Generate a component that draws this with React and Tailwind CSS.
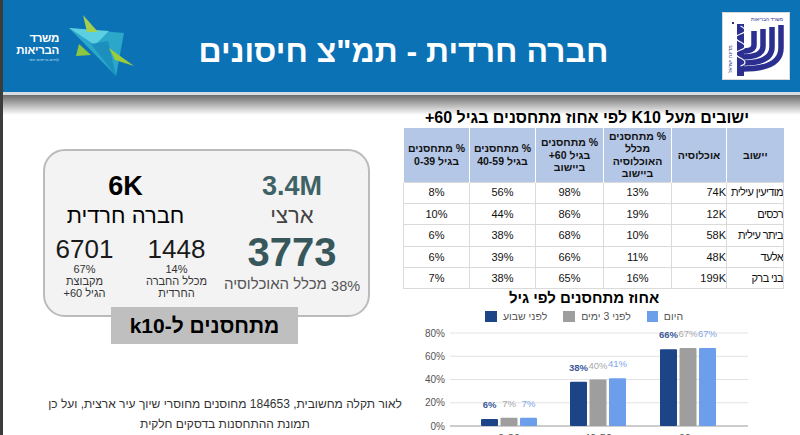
import React from 'react';

const rows = [
  { city: 'מודיעין עילית', pop: '74K', all: '13%', a60: '98%', a40: '56%', a0: '8%' },
  { city: 'רכסים', pop: '12K', all: '19%', a60: '86%', a40: '44%', a0: '10%' },
  { city: 'ביתר עילית', pop: '58K', all: '10%', a60: '68%', a40: '38%', a0: '6%' },
  { city: 'אלעד', pop: '48K', all: '11%', a60: '66%', a40: '39%', a0: '6%' },
  { city: 'בני ברק', pop: '199K', all: '16%', a60: '65%', a40: '38%', a0: '7%' },
];

const heads = [
  { w: 'w-[57px]', lines: ['יישוב'] },
  { w: 'w-[55px]', lines: ['אוכלוסיה'] },
  { w: 'w-[68px]', lines: ['% מתחסנים', 'מכלל', 'האוכלוסיה', 'ביישוב'] },
  { w: 'w-[68px]', lines: ['% מתחסנים', 'בגיל 60+', 'ביישוב'] },
  { w: 'w-[66px]', lines: ['% מתחסנים', 'בגיל 40-59'] },
  { w: 'w-[66px]', lines: ['% מתחסנים', 'בגיל 0-39'] },
];

const groups = [
  { label: '0-39', x: 78, vals: [6, 7, 7] },
  { label: '40-59', x: 167, vals: [38, 40, 41] },
  { label: '60+', x: 257, vals: [66, 67, 67] },
];
const barColors = ['#1c4587', '#9e9e9e', '#6d9eeb'];
const labelColors = ['#3c5a99', '#a9a9a9', '#7fa5e8'];
const yOf = (v) => 101 - v * 1.1625;

const HealthLogo = () => (
  <div className="flex items-center">
    <div dir="rtl" className="w-[42px] text-right text-white">
      <div className="text-[11.5px] font-bold leading-[12px] tracking-[-0.3px]">משרד</div>
      <div className="text-[11.5px] font-bold leading-[13px] tracking-[-0.3px]">הבריאות</div>
      <div className="text-[4px] leading-[6px] text-[#cfe6f5]">לחיים בריאים יותר</div>
    </div>
    <svg width="68" height="66" viewBox="0 0 68 66" className="ml-[8px]">
      <polygon points="2,14 57,19 49,62" fill="#2aa7c9" />
      <polygon points="2,14 42,17 28,31" fill="#5ccfe0" />
      <polygon points="24,30 49,62 41,27" fill="#1c8fbd" />
      <polygon points="16,1 31,18 20,18" fill="#a5cf4c" />
      <polygon points="42,34 67,52 48,46" fill="#9ccb3b" />
      <polygon points="12,30 24,41 9,42" fill="#8cc63f" />
    </svg>
  </div>
);

const MenorahLogo = () => (
  <div className="w-[68px] h-[68px] bg-white border border-[#d8d8d8]">
    <svg width="66" height="66" viewBox="0 0 66 66">
      <text x="60" y="8" fontSize="5" fill="#2b2f8f" textAnchor="end" fontFamily="Liberation Sans, sans-serif">משרד הבריאות</text>
      <text transform="translate(9 60) rotate(-90)" fontSize="5" fill="#2b2f8f" fontFamily="Liberation Sans, sans-serif">מדינת ישראל</text>
      <rect x="9" y="9" width="2" height="2" fill="#2b2f8f" />
      {[58, 49, 40, 31].map((x, i) => {
        const yb = 56 - i * 6;
        return (
          <path
            key={x}
            d={`M${x} ${12 + i * 2} V${yb - (x - 20) * 0.55} Q${x} ${yb} 20 ${yb}`}
            fill="none"
            stroke="#2b2f8f"
            strokeWidth="5.5"
          />
        );
      })}
      <rect x="14" y="11" width="7" height="52" fill="#2b2f8f" />
      <path d="M17.5 13 c6 3 6 6 0 8 c-6 2 -6 5 0 8 c6 3 6 6 0 8 c-6 2 -6 5 0 8 c6 3 6 6 0 8" fill="none" stroke="#ffffff" strokeWidth="1.2" />
    </svg>
  </div>
);

const Chart = () => (
  <svg width="380" height="110" viewBox="0 0 380 110" className="block">
    {[0, 20, 40, 60, 80].map((v) => (
      <g key={v}>
        <line x1="47" x2="345" y1={yOf(v)} y2={yOf(v)} stroke={v === 0 ? '#9a9a9a' : '#e3e3e3'} strokeWidth="1" />
        <text x="42" y={yOf(v) + 3.5} fontSize="10" fill="#555" textAnchor="end" fontFamily="Liberation Sans, sans-serif">{v}%</text>
      </g>
    ))}
    {groups.map((g) => (
      <g key={g.label}>
        {g.vals.map((v, i) => {
          const bx = g.x + i * 19.5;
          return (
            <g key={i}>
              <rect x={bx} y={yOf(v)} width="17" height={v * 1.1625} rx="1" fill={barColors[i]} />
              <text
                x={bx + 8.5}
                y={yOf(v) - 11}
                fontSize="9.5"
                fontWeight={i === 0 ? 700 : 400}
                fill={labelColors[i]}
                textAnchor="middle"
                fontFamily="Liberation Sans, sans-serif"
              >
                {v}%
              </text>
            </g>
          );
        })}
        <text x={g.x + 28} y="117" fontSize="11" fill="#555" textAnchor="middle" fontFamily="Liberation Sans, sans-serif">{g.label}</text>
      </g>
    ))}
  </svg>
);

const App = () => {
  return (
    <div className="w-[800px] h-[435px] overflow-hidden flex bg-white font-['Liberation_Sans','DejaVu_Sans',sans-serif]">
      {/* dark left edge */}
      <div className="w-[3px] bg-[#3c3c3c] shrink-0" />

      <div className="flex-1 flex flex-col">
        {/* header */}
        <header className="h-[92px] bg-[#0b72b6] grid grid-cols-[1fr_auto_1fr] items-center pl-[14px] pr-[10px] shrink-0">
          <div className="justify-self-start pt-[2px]">
            <HealthLogo />
          </div>
          <h1 dir="rtl" className="text-white text-[32px] font-bold leading-none pt-[10px]">
            {'חברה חרדית - תמ"צ חיסונים'}
          </h1>
          <div className="justify-self-end">
            <MenorahLogo />
          </div>
        </header>
        <div className="h-[3px] bg-[#d6dce4] shrink-0" />

        {/* body */}
        <div className="flex-1 flex bg-[linear-gradient(to_bottom,#6b6b6b_0px,#ffffff_20px)]">
          {/* left column */}
          <div className="w-[400px] flex flex-col">
            <div dir="rtl" className="ml-[40px] mt-[54px] w-[327px] h-[168px] rounded-[22px] border-2 border-[#bbbbbb] bg-[#f3f3f3] flex pt-[19px]">
              <div className="w-[152px] flex flex-col items-center">
                <div className="text-[27px] font-bold leading-[32px] text-[#3f6266]">3.4M</div>
                <div className="text-[22px] leading-[27px] text-[#444]">ארצי</div>
                <div className="text-[40px] font-bold leading-[46px] text-[#37575b]">3773</div>
                <div className="text-[15px] leading-[18px] text-[#555] whitespace-nowrap">
                  <span className="text-[14.5px] relative top-[2px]">38%</span> מכלל האוכלוסיה
                </div>
              </div>
              <div className="flex-1 flex flex-col items-center">
                <div className="pr-[10px] flex flex-col items-center">
                  <div className="text-[27px] font-bold leading-[32px] text-black">6K</div>
                  <div className="text-[22px] leading-[28px] text-black">חברה חרדית</div>
                </div>
                <div className="flex gap-[22px] mt-[6px]">
                  <div className="w-[70px] flex flex-col items-center">
                    <div className="text-[26px] leading-[27px] text-[#1a1a1a]">1448</div>
                    <div className="text-[11px] leading-[12px] text-[#333] text-center">
                      <div>14%</div>
                      <div>מכלל החברה</div>
                      <div>החרדית</div>
                    </div>
                  </div>
                  <div className="w-[70px] flex flex-col items-center">
                    <div className="text-[26px] leading-[27px] text-[#1a1a1a]">6701</div>
                    <div className="text-[11px] leading-[12px] text-[#333] text-center">
                      <div>67%</div>
                      <div>מקבוצת</div>
                      <div>הגיל 60+</div>
                    </div>
                  </div>
                </div>
              </div>
            </div>

            <div dir="rtl" className="ml-[108px] -mt-[10px] w-[187px] h-[37px] bg-[#bfbfbf] flex items-center justify-center text-[21px] font-bold text-black">
              מתחסנים ל-k10
            </div>

            <div dir="rtl" className="ml-[32px] mt-[50px] w-[380px] text-center text-[12px] leading-[20px] text-[#333]">
              <div className="whitespace-nowrap">לאור תקלה מחשובית, 184653 מחוסנים מחוסרי שיוך עיר ארצית, ועל כן</div>
              <div>תמונת ההתחסנות בדסקים חלקית</div>
            </div>
          </div>

          {/* right column */}
          <div className="flex-1 flex flex-col pt-[13px]">
            <div dir="rtl" className="w-[368px] text-center text-[16px] font-bold leading-[20px] text-black">
              ישובים מעל K10 לפי אחוז מתחסנים בגיל 60+
            </div>
            <table dir="rtl" className="w-[380px] border-collapse table-fixed">
              <thead>
                <tr className="h-[54px] bg-[#b4c7e7]">
                  {heads.map((h, i) => (
                    <th key={i} className={`${h.w} border-l border-white text-[10.5px] font-bold leading-[12.5px] text-center text-[#111] p-0`}>
                      {h.lines.map((l) => (
                        <div key={l}>{l}</div>
                      ))}
                    </th>
                  ))}
                </tr>
              </thead>
              <tbody>
                {rows.map((r) => (
                  <tr key={r.city} className="h-[21.4px] text-[11px] text-[#111]">
                    <td className="border border-[#dadada] text-right whitespace-nowrap overflow-hidden p-0 tracking-[-0.6px]">{r.city}</td>
                    <td className="border border-[#dadada] text-right p-0">{r.pop}</td>
                    <td className="border border-[#dadada] text-center p-0">{r.all}</td>
                    <td className="border border-[#dadada] text-center p-0">{r.a60}</td>
                    <td className="border border-[#dadada] text-center p-0">{r.a40}</td>
                    <td className="border border-[#dadada] text-center p-0">{r.a0}</td>
                  </tr>
                ))}
              </tbody>
            </table>

            {/* chart */}
            <div className="w-[362px] flex flex-col items-center">
              <div dir="rtl" className="text-[15px] font-bold leading-[18px] text-black">אחוז מתחסנים לפי גיל</div>
              <div className="flex items-center gap-[16px] mt-[2px] text-[10.5px] leading-[14px] text-[#555]">
                <div className="flex items-center gap-[6px]">
                  <span className="w-[12px] h-[11px] bg-[#1c4587]" />
                  <span>לפני שבוע</span>
                </div>
                <div className="flex items-center gap-[6px]">
                  <span className="w-[12px] h-[11px] bg-[#9e9e9e]" />
                  <span dir="rtl">לפני 3 ימים</span>
                </div>
                <div className="flex items-center gap-[6px]">
                  <span className="w-[11px] h-[11px] bg-[#6d9eeb]" />
                  <span>היום</span>
                </div>
              </div>
            </div>
            <div className="mt-[2px]">
              <Chart />
            </div>
          </div>
        </div>
      </div>
    </div>
  );
};

export default App;
